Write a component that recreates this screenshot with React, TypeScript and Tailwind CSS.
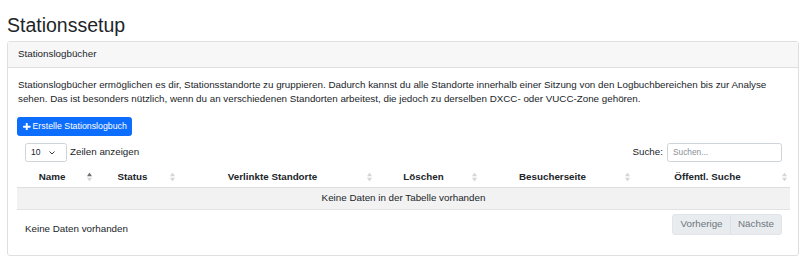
const columns = [
  { label: 'Name', width: 'w-[78px]', active: true },
  { label: 'Status', width: 'w-[83px]', active: false },
  { label: 'Verlinkte Standorte', width: 'w-[197px]', active: false },
  { label: 'Löschen', width: 'w-[105px]', active: false },
  { label: 'Besucherseite', width: 'w-[153px]', active: false },
  { label: 'Öffentl. Suche', width: 'w-[157px]', active: false },
];

const SortIcon = ({ active }: { active?: boolean }) => (
  <svg
    width="5"
    height="9"
    viewBox="0 0 5 9"
    className="absolute right-[3.5px] top-1/2 -translate-y-1/2"
  >
    <polygon points="0,3.8 2.5,0 5,3.8" fill={active ? '#6f6f6f' : '#d6d6d6'} />
    <polygon points="0,5.2 2.5,9 5,5.2" fill="#d6d6d6" />
  </svg>
);

const PlusIcon = () => (
  <svg width="7.5" height="7.5" viewBox="0 0 8 8" className="shrink-0">
    <rect x="3" y="0" width="2" height="8" rx="0.4" fill="#fff" />
    <rect x="0" y="3" width="8" height="2" rx="0.4" fill="#fff" />
  </svg>
);

const App = () => {
  return (
    <div className="w-[800px] h-[257px] bg-white text-[#212529] font-['Liberation_Sans',Arial,sans-serif] overflow-hidden">
      <h1 className="pl-[7px] pt-[14px] mb-[4px] text-[19.5px] leading-[23px] font-normal">
        Stationssetup
      </h1>

      <div className="ml-[7px] w-[792px] border border-[#dfdfdf] rounded-[3px]">
        <div className="px-[10px] py-[5px] bg-[#f7f7f7] border-b border-[#dfdfdf] text-[9.8px] leading-[14.7px]">
          Stationslogbücher
        </div>

        <div className="p-[10px] text-[9.8px] leading-[14.6px]">
          <p className="mb-[10px]">
            Stationslogbücher ermöglichen es dir, Stationsstandorte zu gruppieren. Dadurch kannst du alle
            Standorte innerhalb einer Sitzung von den Logbuchbereichen bis zur Analyse sehen. Das ist besonders
            nützlich, wenn du an verschiedenen Standorten arbeitest, die jedoch zu derselben DXCC- oder
            VUCC-Zone gehören.
          </p>

          <button className="-ml-[1px] flex items-center gap-[2px] h-[19px] pl-[5px] pr-[4.5px] bg-[#0d6efd] border border-[#0d6efd] rounded-[2.5px] text-white text-[8.8px] leading-none">
            <PlusIcon />
            <span>Erstelle Stationslogbuch</span>
          </button>

          <div className="mt-[7px] flex items-center justify-between pl-[7px] pr-[6px]">
            <div className="flex items-center gap-[3px]">
              <div className="w-[42px] h-[19.5px] border border-[#ced4da] rounded-[2.5px] flex items-center justify-between pl-[5px] pr-[11px] text-[8.5px]">
                <span>10</span>
                <svg width="6" height="4" viewBox="0 0 6 4">
                  <polyline points="0.5,0.5 3,3 5.5,0.5" fill="none" stroke="#343a40" strokeWidth="1" />
                </svg>
              </div>
              <span>Zeilen anzeigen</span>
            </div>
            <div className="flex items-center gap-[4px]">
              <span>Suche:</span>
              <div className="w-[115px] h-[19.5px] border border-[#ced4da] rounded-[2.5px] flex items-center pl-[5px] text-[8.3px] text-[#8a9096]">
                Suchen...
              </div>
            </div>
          </div>

          <table className="-ml-[1px] mt-[5px] w-[773px] table-fixed border-collapse">
            <colgroup>
              {columns.map((c) => (
                <col key={c.label} className={c.width} />
              ))}
            </colgroup>
            <thead>
              <tr>
                {columns.map((c) => (
                  <th
                    key={c.label}
                    className="relative pl-[11px] pr-[19px] pt-[3px] pb-[2px] text-center font-bold leading-[14.7px] border-b border-[#dedede]"
                  >
                    {c.label}
                    <SortIcon active={c.active} />
                  </th>
                ))}
              </tr>
            </thead>
            <tbody>
              <tr>
                <td
                  colSpan={6}
                  className="bg-[#f2f2f2] text-center py-[3px] leading-[14.7px] border-b border-[#e2e2e2]"
                >
                  Keine Daten in der Tabelle vorhanden
                </td>
              </tr>
            </tbody>
          </table>

          <div className="mt-[4px] mb-[8px] flex items-start justify-between pl-[7px] pr-[6px]">
            <div className="pt-[8px] leading-[14.7px]">Keine Daten vorhanden</div>
            <div className="flex h-[21px] rounded-[3px] bg-[#e9ecef] border border-[#e1e4e8] text-[#6c757d] leading-none">
              <span className="flex items-center px-[7.5px]">Vorherige</span>
              <span className="flex items-center px-[7px] border-l border-[#dde0e4]">Nächste</span>
            </div>
          </div>
        </div>
      </div>
    </div>
  );
};

export default App;
